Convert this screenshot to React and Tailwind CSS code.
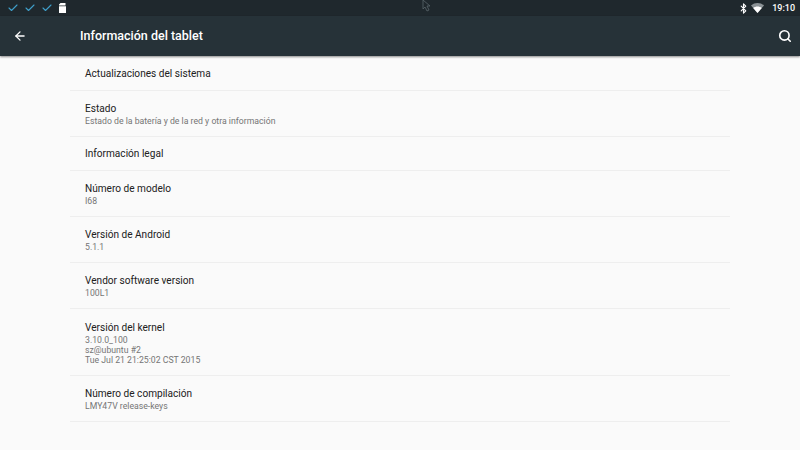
import React from "react";
import { ArrowLeft, Search, Check, Bluetooth } from "lucide-react";

const rows = [
  { title: "Actualizaciones del sistema", lines: [], height: "h-[34px]" },
  { title: "Estado", lines: ["Estado de la batería y de la red y otra información"], height: "h-[46px] pt-[1px]" },
  { title: "Información legal", lines: [], height: "h-[34px]" },
  { title: "Número de modelo", lines: ["I68"], height: "h-[46px] pt-[1px]" },
  { title: "Versión de Android", lines: ["5.1.1"], height: "h-[46px] pt-[1px]" },
  { title: "Vendor software version", lines: ["100L1"], height: "h-[46px] pt-[1px]" },
  {
    title: "Versión del kernel",
    lines: ["3.10.0_100", "sz@ubuntu #2", "Tue Jul 21 21:25:02 CST 2015"],
    height: "h-[67px] pt-[1px]",
  },
  { title: "Número de compilación", lines: ["LMY47V release-keys"], height: "h-[46px] pt-[1px]" },
];

const App = () => {
  return (
    <div className="relative w-[800px] h-[450px] overflow-hidden bg-[#fafafa] font-['Roboto',sans-serif]">
      {/* Status bar */}
      <div className="flex items-center h-4 bg-[#1f282d] text-white">
        <div className="flex items-center gap-[5px] pl-[7px]">
          <Check className="h-3 w-3 text-[#3f9fca]" strokeWidth={2.2} />
          <Check className="h-3 w-3 text-[#3f9fca]" strokeWidth={2.2} />
          <Check className="h-3 w-3 text-[#3f9fca]" strokeWidth={2.2} />
          <svg className="ml-[1px] h-[10px] w-[7px]" viewBox="0 0 7 10" fill="#fff">
            <path d="M1.5 0h5v2.6H0V1.5zM0 3.2h7V10H0z" />
          </svg>
        </div>
        <div className="flex items-center ml-auto pr-[5px]">
          <Bluetooth className="h-[11px] w-[11px]" strokeWidth={2.5} />
          <svg className="ml-[2px] h-[10px] w-[13px]" viewBox="0 0 13 10">
            <path d="M0 2.5C3.6-.8 9.4-.8 13 2.5L6.5 10z" fill="#8b9296" />
            <path d="M2.2 5C4.6 3 8.4 3 10.800 5L6.5 10z" fill="#fff" />
          </svg>
          <span className="ml-[8px] text-[9px] font-medium leading-4">19:10</span>
        </div>
      </div>

      {/* Action bar */}
      <div className="flex items-center h-10 bg-[#263238] text-white shadow-[0_1px_2px_rgba(0,0,0,0.45)]">
        <ArrowLeft className="ml-[13px] h-[14px] w-[14px]" strokeWidth={2.2} />
        <span className="ml-[53px] text-[12.5px] font-medium">Información del tablet</span>
        <Search className="ml-auto mr-[8px] h-[14px] w-[14px]" strokeWidth={2.8} />
      </div>

      {/* List */}
      <div className="flex flex-col mx-[70px] pt-[1px]">
        {rows.map((row) => (
          <div
            key={row.title}
            className={`flex flex-col justify-center px-[15px] border-b border-[#eeeeee] ${row.height}`}
          >
            <p className="text-[10.1px] leading-[14px] text-[#212121]">{row.title}</p>
            {row.lines.map((line) => (
              <p key={line} className="text-[8.7px] leading-[10px] text-[#757575]">
                {line}
              </p>
            ))}
          </div>
        ))}
      </div>

      {/* Mouse pointer */}
      <svg className="absolute left-[422px] top-0 h-3 w-[10px]" viewBox="0 0 10 12" fill="none">
        <path d="M1 0v9l2-2 2 4 2-1-2-4h3z" stroke="#59646a" strokeWidth="0.8" />
      </svg>
    </div>
  );
};

export default App;
